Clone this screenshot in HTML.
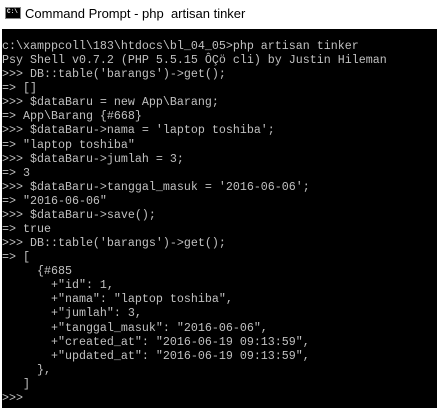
<!DOCTYPE html>
<html><head><style>
html,body{margin:0;padding:0;background:#fff;width:439px;height:408px;overflow:hidden}
.title{position:absolute;left:0;top:0;width:439px;height:29px;background:#fff}
.title span{position:absolute;left:25px;top:6px;font:13px "Liberation Sans",sans-serif;color:#000}
.icon{position:absolute;left:5px;top:7px;width:14px;height:10px;background:#000;border:1px solid #888}
.icon:after{content:"C:\\";position:absolute;left:1px;top:0;font:bold 6px "Liberation Mono",monospace;color:#fff}
.con{position:absolute;left:2px;top:29px;width:435px;height:379px;background:#000}
pre{margin:0;position:absolute;left:0;top:10px;font:11.67px/14.08px "Liberation Mono",monospace;color:#c0c0c0;white-space:pre}
</style></head><body>
<div class="title"><div class="icon"></div><span>Command Prompt - php&nbsp; artisan tinker</span></div>
<div class="con"><pre>c:\xamppcoll\183\htdocs\bl_04_05&gt;php artisan tinker
Psy Shell v0.7.2 (PHP 5.5.15 ÔÇö cli) by Justin Hileman
&gt;&gt;&gt; DB::table('barangs')-&gt;get();
=&gt; []
&gt;&gt;&gt; $dataBaru = new App\Barang;
=&gt; App\Barang {#668}
&gt;&gt;&gt; $dataBaru-&gt;nama = 'laptop toshiba';
=&gt; "laptop toshiba"
&gt;&gt;&gt; $dataBaru-&gt;jumlah = 3;
=&gt; 3
&gt;&gt;&gt; $dataBaru-&gt;tanggal_masuk = '2016-06-06';
=&gt; "2016-06-06"
&gt;&gt;&gt; $dataBaru-&gt;save();
=&gt; true
&gt;&gt;&gt; DB::table('barangs')-&gt;get();
=&gt; [
     {#685
       +"id": 1,
       +"nama": "laptop toshiba",
       +"jumlah": 3,
       +"tanggal_masuk": "2016-06-06",
       +"created_at": "2016-06-19 09:13:59",
       +"updated_at": "2016-06-19 09:13:59",
     },
   ]
&gt;&gt;&gt;</pre></div>
</body></html>
